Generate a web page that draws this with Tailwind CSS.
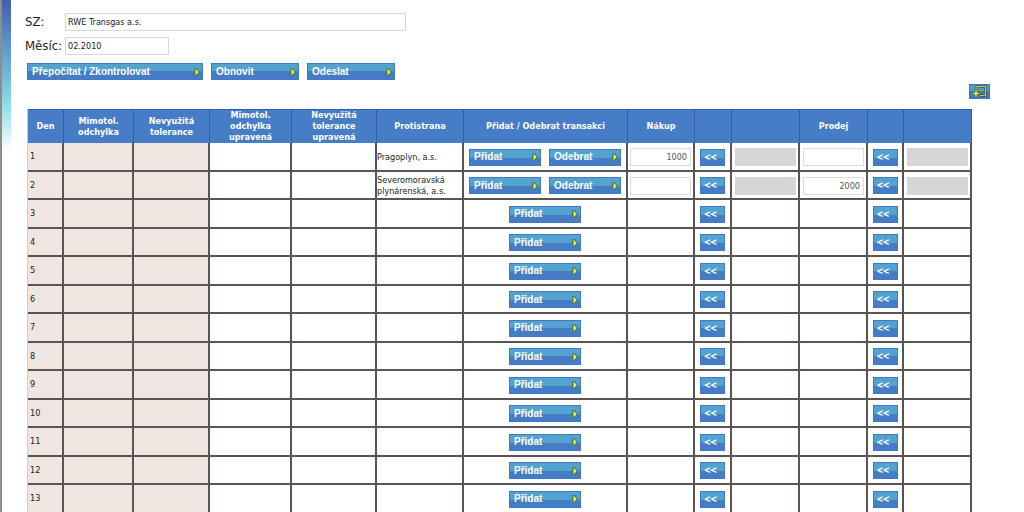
<!DOCTYPE html>
<html lang="cs">
<head>
<meta charset="utf-8">
<title>Protistrany</title>
<script src="https://cdn.jsdelivr.net/npm/@tailwindcss/browser@4"></script>
</head>
<body class="min-h-screen bg-white font-['DejaVu_Sans_Condensed','DejaVu_Sans',sans-serif] text-[9px] text-[#222]">
<div class="flex h-screen overflow-hidden">
  <div class="w-0.5 shrink-0 bg-[#8e8e86]"></div>
  <div class="h-[152px] w-[9px] shrink-0 bg-linear-to-b from-[#3f5fb0] via-[#8fe0e8] via-70% to-white"></div>
  <main class="min-w-0 flex-1 pt-[13px] pr-[52px] pl-4">
    <form class="-ml-0.5">
      <div class="flex h-[18px] items-center">
        <label for="sz" class="w-10 shrink-0 text-[13px]">SZ:</label>
        <input id="sz" value="RWE Transgas a.s." class="h-[18px] w-[341px] border border-[#d8d8d8] px-0.5">
      </div>
      <div class="mt-1.5 flex h-[18px] items-center">
        <label for="mesic" class="w-10 shrink-0 text-[13px]">Měsíc:</label>
        <input id="mesic" value="02.2010" class="h-[18px] w-[104px] border border-[#d8d8d8] px-0.5">
      </div>
    </form>
    <div id="actions" class="mt-2 flex gap-2"></div>
    <div class="-mr-[18px] mt-1 flex justify-end">
      <button type="button" aria-label="Export" class="block h-[15px] w-[21px]">
        <svg viewBox="0 0 21 15" class="block h-[15px] w-[21px]">
          <rect width="21" height="15" fill="#3d78c0"/><rect x="1" y="1" width="19" height="6" fill="#4c9cce"/>
          <path d="M8 6V2.500h8.500v9H11" fill="none" stroke="#3f5a38" stroke-width="2.600"/>
          <path d="M8 6V2.500h8.500v9H11" fill="none" stroke="#b9c848" stroke-width="1.200"/>
          <path d="M6 6h2v2.500h2.500v2H8V13H6v-2.500H3.500v-2H6z" fill="#f4f03c" stroke="#3c5a35" stroke-width=".6"/>
        </svg>
      </button>
    </div>
    <table class="mt-2.5 w-full table-fixed border-separate border-spacing-0 border-l border-[#d8c8c4]">
      <colgroup>
        <col class="w-[36px]"><col class="w-[70px]"><col class="w-[76px]"><col class="w-[82px]"><col class="w-[85px]"><col class="w-[87px]"><col class="w-[164px]"><col class="w-[67px]"><col class="w-[37px]"><col class="w-[68px]"><col class="w-[68px]"><col class="w-[36px]"><col class="w-[68px]">
      </colgroup>
      <thead><tr id="head" class="h-[34px] bg-[#467dc6] leading-[11px] font-bold text-white"></tr></thead>
      <tbody id="rows"></tbody>
    </table>
  </main>
</div>
<script>
const arrow = '<svg viewBox="0 0 6 8" class="h-2 w-1.5 shrink-0"><path d="M0 0h3l3 4-3 4H0z" fill="#3f7a78"/><path d="M1.500 .5l3.200 3.500-3.200 3.500z" fill="#f2f03a"/></svg>';
const button = (label, width) => `<button type="button" class="${width} flex h-[17px] items-center justify-between border border-[#4379c2] bg-linear-to-b from-[#52a3cf] from-50% to-[#467cc5] to-50% pr-0.5 pl-1 font-['Liberation_Sans',sans-serif] text-[10px] leading-none font-bold text-white">${label}${arrow}</button>`;
const shift = label => `<button type="button" aria-label="${label}" class="mx-auto block h-[17px] w-[25px] border border-[#4379c2] bg-linear-to-b from-[#52a3cf] from-50% to-[#467cc5] to-50% pr-1 pb-0.5 text-center font-['Noto_Sans',sans-serif] text-[11px] leading-none font-bold text-white">&lt;&lt;</button>`;
const field = (label, value) => `<input aria-label="${label}" value="${value}" class="block h-[18px] w-full border border-[#dcdcdc] px-[3px] text-right text-[#555]">`;
const locked = label => `<input aria-label="${label}" disabled class="block h-[18px] w-full bg-[#d6d6d6]">`;
document.getElementById('actions').innerHTML = button('Přepočítat / Zkontrolovat', 'w-[176px]') + button('Obnovit', 'w-[88px]') + button('Odeslat', 'w-[88px]');
const titles = ['Den', 'Mimotol. odchylka', 'Nevyužitá tolerance', 'Mimotol. odchylka upravená', 'Nevyužitá tolerance upravená', 'Protistrana', 'Přidat / Odebrat transakci', 'Nákup', '', '', 'Prodej', '', ''];
document.getElementById('head').innerHTML = titles.map(t => `<th class="border-t border-r border-[#2f61ab] px-2 py-0">${t}</th>`).join('');
const data = { 1: ['Pragoplyn, a.s.', '1000', ''], 2: ['Severomoravská plynárenská, a.s.', '', '2000'] };
let html = '';
for (let day = 1; day <= 13; day++) {
  const d = data[day];
  const cell = (content, look) => `<td class="border-r-2 border-b-2 border-[#5a5554] pt-px pb-0 ${look}">${content}</td>`;
  html += '<tr class="odd:h-[29px] even:h-7">'
    + cell(day, 'bg-[#efe5e1] pl-0.5') + cell('', 'bg-[#efe5e1]') + cell('', 'bg-[#efe5e1]') + cell('', '') + cell('', '')
    + cell(d ? d[0] : '', 'leading-[11px]')
    + cell('<div class="flex justify-center gap-2">' + button('Přidat', 'w-[72px]') + (d ? button('Odebrat', 'w-[72px]') : '') + '</div>', '')
    + cell(d ? field('Nákup ' + day, d[1]) : '', 'px-0.5')
    + cell(shift('Převzít nákup ' + day), '')
    + cell(d ? locked('Nákup převzatý ' + day) : '', 'pl-[3px] pr-0.5')
    + cell(d ? field('Prodej ' + day, d[2]) : '', 'pl-[3px] pr-0.5')
    + cell(shift('Převzít prodej ' + day), '')
    + cell(d ? locked('Prodej převzatý ' + day) : '', 'pl-[3px] pr-0.5')
    + '</tr>';
}
document.getElementById('rows').innerHTML = html;
</script>
</body>
</html>
